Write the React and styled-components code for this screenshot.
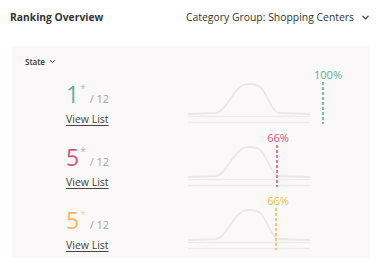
import React from "react";
import styled, { createGlobalStyle } from "styled-components";

const GlobalStyle = createGlobalStyle`
  html, body { margin: 0; padding: 0; background: #ffffff; }
  body { font-family: "Open Sans", "Noto Sans", sans-serif; color: #333; }
`;

const Page = styled.div`
  width: 381px;
  height: 274px;
  box-sizing: border-box;
  padding: 0 11px 0 10px;
`;

const Header = styled.div`
  display: flex;
  align-items: center;
  justify-content: space-between;
  height: 34px;
`;

const Title = styled.div`
  font-size: 10.3px;
  font-weight: 700;
  color: #333;
`;

const GroupSelect = styled.div`
  display: flex;
  align-items: center;
  gap: 7px;
  font-size: 10.4px;
  color: #333;
`;

const Card = styled.div`
  margin: 12px 0 0 2px;
  height: 212px;
  box-sizing: border-box;
  padding-top: 9px;
  background: #fbf8f9;
  border-radius: 3px;
`;

const StateSelect = styled.div`
  display: flex;
  align-items: center;
  gap: 4px;
  padding-left: 13px;
  height: 12px;
  font-size: 8px;
  font-weight: 600;
  color: #333;
`;

const Row = styled.div`
  display: flex;
  height: 63px;
  padding-left: 54px;
`;

const Left = styled.div`
  width: 122px;
  padding-top: 16px;
  display: flex;
  flex-direction: column;
`;

const Score = styled.div`
  display: flex;
  align-items: baseline;
  line-height: 1;
  height: 23px;
`;

const Big = styled.span`
  font-size: 23px;
  color: ${(p) => p.$color};
`;

const Star = styled.span`
  font-size: 10px;
  align-self: flex-start;
  margin-left: 1px;
  color: ${(p) => p.$color};
  opacity: 0.6;
`;

const Total = styled.span`
  font-size: 11px;
  color: #a3a3a3;
  margin-left: 4px;
`;

const ViewList = styled.a`
  margin-top: 7px;
  font-size: 10.5px;
  line-height: 13px;
  color: #444;
  text-decoration: underline;
  text-underline-offset: 2px;
  cursor: pointer;
`;

const Chart = styled.svg`
  display: block;
  flex: none;
`;

const Chevron = ({ size = 8 }) => (
  <svg width={size} height={size} viewBox="0 0 10 10">
    <path d="M2 3.5 L5 6.5 L8 3.5" fill="none" stroke="#333" strokeWidth="1.4" strokeLinecap="round" strokeLinejoin="round" />
  </svg>
);

const rows = [
  { rank: 1, color: "#5fae99", pct: "100%", lineX: 135, labelX: 140 },
  { rank: 5, color: "#d6577a", pct: "66%", lineX: 89, labelX: 90 },
  { rank: 5, color: "#f4b858", pct: "66%", lineX: 88, labelX: 90 },
];

const Distribution = ({ color, pct, lineX, labelX }) => (
  <Chart width="160" height="63" viewBox="0 0 160 63">
    <path
      d="M0 47 L28 46 C36 45 42 30 50 22 C54 18 56 17 62 17 C68 17 71 18 74 22 C80 30 84 44 90 46 L122 47"
      fill="none"
      stroke="#ebe7e8"
      strokeWidth="1.8"
    />
    <line x1="0" y1="49.5" x2="122" y2="49.5" stroke="#eeeaeb" strokeWidth="1.5" />
    <line x1="0" y1="55.5" x2="122" y2="55.5" stroke="#eeeaeb" strokeWidth="1.5" />
    <line x1={lineX} y1="15" x2={lineX} y2="57" stroke={color} strokeWidth="1.6" strokeDasharray="3 2" />
    <text x={labelX} y="12" textAnchor="middle" fontSize="11" fill={color} fontFamily="Open Sans, sans-serif">
      {pct}
    </text>
  </Chart>
);

export default function App() {
  return (
    <>
      <GlobalStyle />
      <Page>
        <Header>
          <Title>Ranking Overview</Title>
          <GroupSelect>
            Category Group: Shopping Centers
            <Chevron size={9} />
          </GroupSelect>
        </Header>
        <Card>
          <StateSelect>
            State
            <Chevron size={7} />
          </StateSelect>
          {rows.map((r, i) => (
            <Row key={i}>
              <Left>
                <Score>
                  <Big $color={r.color}>{r.rank}</Big>
                  <Star $color={r.color}>*</Star>
                  <Total>/ 12</Total>
                </Score>
                <ViewList>View List</ViewList>
              </Left>
              <Distribution {...r} />
            </Row>
          ))}
        </Card>
      </Page>
    </>
  );
}
